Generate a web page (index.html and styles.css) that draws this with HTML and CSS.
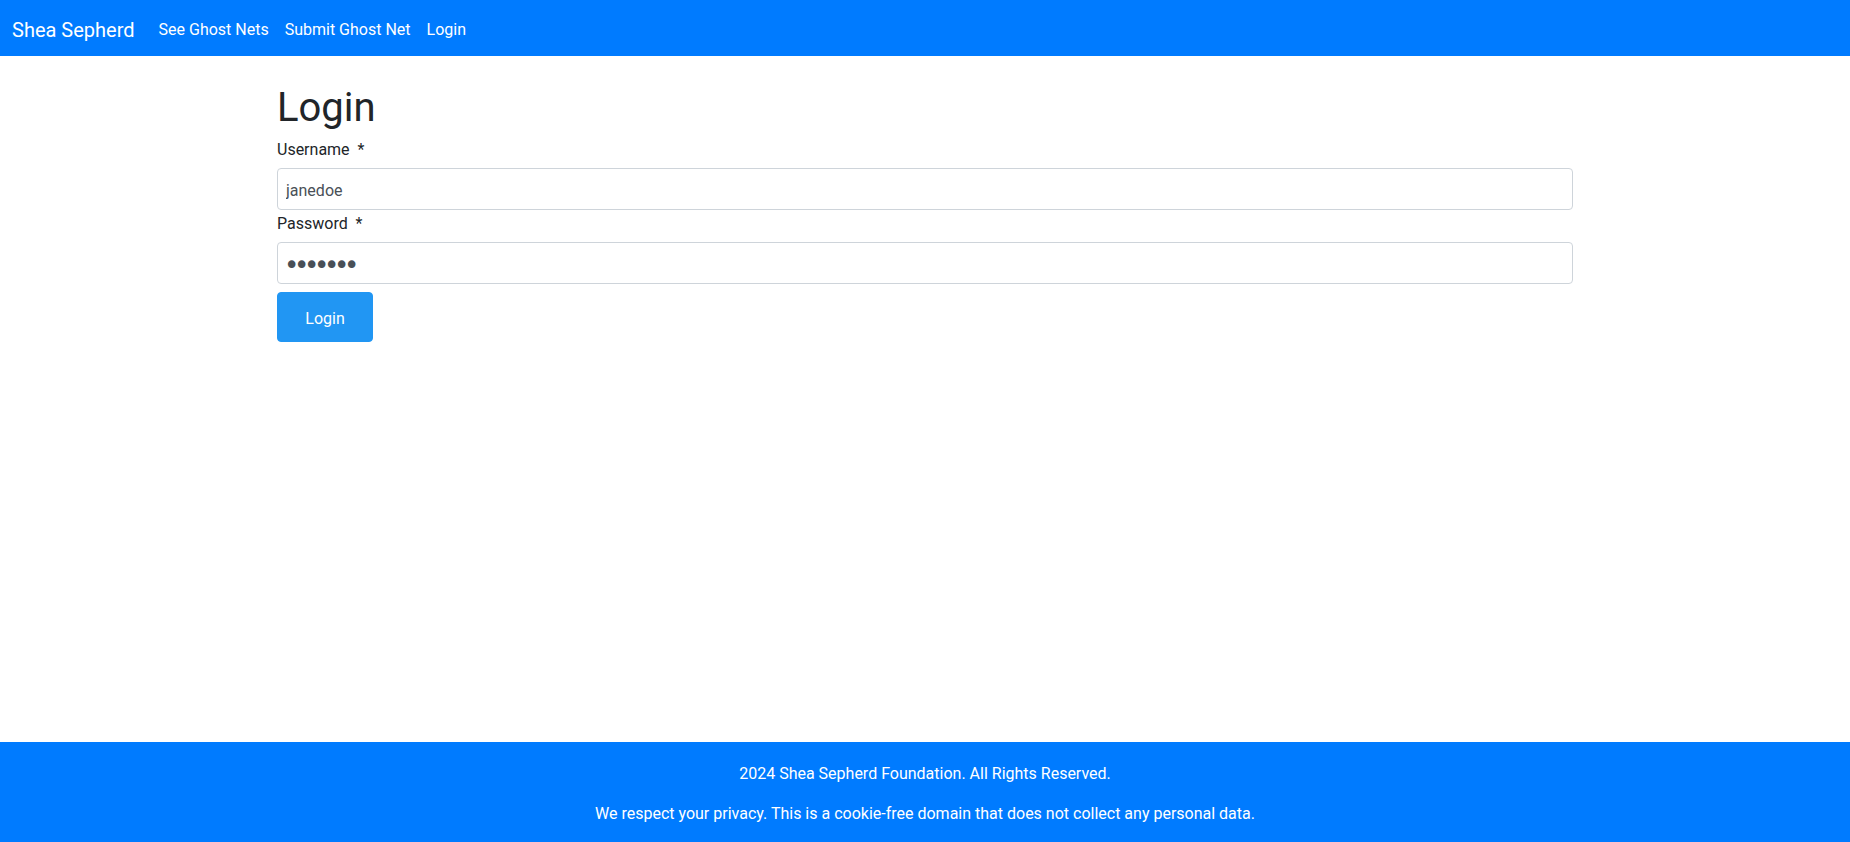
FILE: index.html
```html
<!DOCTYPE html>
<html lang="en">
<head>
<meta charset="utf-8">
<title>Login - Shea Sepherd</title>
<link rel="stylesheet" href="styles.css">
</head>
<body>
<nav class="navbar">
  <a class="brand" href="#">Shea Sepherd</a>
  <ul class="nav">
    <li><a class="nav-link" href="#">See Ghost Nets</a></li>
    <li><a class="nav-link" href="#">Submit Ghost Net</a></li>
    <li><a class="nav-link" href="#">Login</a></li>
  </ul>
</nav>
<main class="container">
  <h1 class="title">Login</h1>
  <form class="form">
    <label class="label" for="username">Username&nbsp; *</label>
    <input class="input" id="username" type="text" value="janedoe">
    <label class="label" for="password">Password&nbsp; *</label>
    <input class="input input-password" id="password" type="password" value="1234567">
    <button class="btn" type="button">Login</button>
  </form>
</main>
<footer class="footer">
  <p class="footer-line">2024 Shea Sepherd Foundation. All Rights Reserved.</p>
  <p class="footer-line">We respect your privacy. This is a cookie-free domain that does not collect any personal data.</p>
</footer>
</body>
</html>
```
FILE: styles.css
```css
* { box-sizing: border-box; }
html, body { height: 100%; }
body {
  margin: 0;
  min-height: 100vh;
  display: flex;
  flex-direction: column;
  font-family: Roboto, "Noto Sans", sans-serif;
  font-size: 16px;
  line-height: 24px;
  color: #212529;
  background: #fff;
}
.navbar {
  display: flex;
  align-items: center;
  height: 56px;
  padding: 10px 12px 6px;
  background: #007bff;
  flex-shrink: 0;
}
.brand {
  color: #fff;
  text-decoration: none;
  font-size: 20px;
  line-height: 30px;
  padding: 5px 0;
  margin-right: 16px;
}
.nav {
  display: flex;
  list-style: none;
  margin: 0;
  padding: 0;
}
.nav-link {
  display: block;
  color: #fff;
  text-decoration: none;
  padding: 8px;
  line-height: 24px;
}
.container {
  flex: 1 0 auto;
  width: 100%;
  max-width: 1320px;
  margin: 0 auto;
  padding: 24px 12px 0;
}
.title {
  margin: 0 0 4px;
  padding-top: 4px;
  font-size: 40px;
  line-height: 48px;
  font-weight: 400;
}
.form {
  display: flex;
  flex-direction: column;
  align-items: flex-start;
}
.label {
  display: block;
  padding-top: 2px;
  margin-bottom: 6px;
  line-height: 24px;
}
.input {
  display: block;
  width: 100%;
  height: 42px;
  padding: 9px 8px 7px;
  font-family: inherit;
  font-size: 16px;
  line-height: 24px;
  color: #495057;
  background: #fff;
  border: 1px solid #ced4da;
  border-radius: 4px;
  outline: none;
}
.input-password {
  padding: 10px 8px 6px 6px;
  font-family: "DejaVu Sans", sans-serif;
  font-size: 26px;
  letter-spacing: -5.35px;
  color: #495057;
}
.btn {
  margin-top: 8px;
  width: 96px;
  height: 50px;
  padding: 3px 0 0;
  font-family: inherit;
  font-size: 16px;
  color: #fff;
  background: #2196f3;
  border: 1px solid #2196f3;
  border-radius: 4px;
  cursor: pointer;
}
.footer {
  flex-shrink: 0;
  background: #007bff;
  color: #fff;
  text-align: center;
  padding: 20px 12px 16px;
}
.footer-line {
  margin: 0;
  line-height: 24px;
}
.footer-line + .footer-line {
  margin-top: 16px;
}
```
